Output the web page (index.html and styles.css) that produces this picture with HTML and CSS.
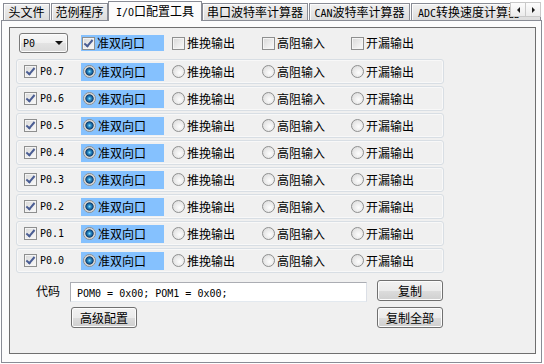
FILE: index.html
```html
<!DOCTYPE html>
<html>
<head>
    <title>I/O口配置工具</title>
    <link rel="stylesheet" href="styles.css">
    <meta http-equiv="content-type" charset="UTF-8">
</head>
<body>
    <div class="tabs">
        <div class="tab tab-head">头文件</div>
        <div class="tab tab-demo">范例程序</div>
        <div class="tab tab-io active"><span class="mono">I/O</span>口配置工具</div>
        <div class="tab tab-uart">串口波特率计算器</div>
        <div class="tab tab-can"><span class="mono">CAN</span>波特率计算器</div>
        <div class="tab tab-adc"><span class="mono">ADC</span>转换速度计算器</div>
        <div class="tab-scroll">
            <span class="scroll-btn"><span class="arrow-left"></span></span>
            <span class="scroll-btn"><span class="arrow-right"></span></span>
        </div>
    </div>

    <div class="page">
        <div class="group">
            <div class="head-row">
                <div class="combo"><span class="mono">P0</span><span class="combo-arrow"></span></div>
                <div class="col c1"><span class="hl"><span class="cb checked"></span>准双向口</span></div>
                <div class="col c2"><span class="cb"></span>推挽输出</div>
                <div class="col c3"><span class="cb"></span>高阻输入</div>
                <div class="col c4"><span class="cb"></span>开漏输出</div>
            </div>

            <div class="pin-list">
                <div class="pin">
                    <div class="pin-name"><span class="cb checked"></span><span class="mono">P0.7</span></div>
                    <div class="col c1"><span class="hl hl-row"><span class="rb on"></span>准双向口</span></div>
                    <div class="col c2"><span class="rb"></span>推挽输出</div>
                    <div class="col c3"><span class="rb"></span>高阻输入</div>
                    <div class="col c4"><span class="rb"></span>开漏输出</div>
                </div>
                <div class="pin">
                    <div class="pin-name"><span class="cb checked"></span><span class="mono">P0.6</span></div>
                    <div class="col c1"><span class="hl hl-row"><span class="rb on"></span>准双向口</span></div>
                    <div class="col c2"><span class="rb"></span>推挽输出</div>
                    <div class="col c3"><span class="rb"></span>高阻输入</div>
                    <div class="col c4"><span class="rb"></span>开漏输出</div>
                </div>
                <div class="pin">
                    <div class="pin-name"><span class="cb checked"></span><span class="mono">P0.5</span></div>
                    <div class="col c1"><span class="hl hl-row"><span class="rb on"></span>准双向口</span></div>
                    <div class="col c2"><span class="rb"></span>推挽输出</div>
                    <div class="col c3"><span class="rb"></span>高阻输入</div>
                    <div class="col c4"><span class="rb"></span>开漏输出</div>
                </div>
                <div class="pin">
                    <div class="pin-name"><span class="cb checked"></span><span class="mono">P0.4</span></div>
                    <div class="col c1"><span class="hl hl-row"><span class="rb on"></span>准双向口</span></div>
                    <div class="col c2"><span class="rb"></span>推挽输出</div>
                    <div class="col c3"><span class="rb"></span>高阻输入</div>
                    <div class="col c4"><span class="rb"></span>开漏输出</div>
                </div>
                <div class="pin">
                    <div class="pin-name"><span class="cb checked"></span><span class="mono">P0.3</span></div>
                    <div class="col c1"><span class="hl hl-row"><span class="rb on"></span>准双向口</span></div>
                    <div class="col c2"><span class="rb"></span>推挽输出</div>
                    <div class="col c3"><span class="rb"></span>高阻输入</div>
                    <div class="col c4"><span class="rb"></span>开漏输出</div>
                </div>
                <div class="pin">
                    <div class="pin-name"><span class="cb checked"></span><span class="mono">P0.2</span></div>
                    <div class="col c1"><span class="hl hl-row"><span class="rb on"></span>准双向口</span></div>
                    <div class="col c2"><span class="rb"></span>推挽输出</div>
                    <div class="col c3"><span class="rb"></span>高阻输入</div>
                    <div class="col c4"><span class="rb"></span>开漏输出</div>
                </div>
                <div class="pin">
                    <div class="pin-name"><span class="cb checked"></span><span class="mono">P0.1</span></div>
                    <div class="col c1"><span class="hl hl-row"><span class="rb on"></span>准双向口</span></div>
                    <div class="col c2"><span class="rb"></span>推挽输出</div>
                    <div class="col c3"><span class="rb"></span>高阻输入</div>
                    <div class="col c4"><span class="rb"></span>开漏输出</div>
                </div>
                <div class="pin">
                    <div class="pin-name"><span class="cb checked"></span><span class="mono">P0.0</span></div>
                    <div class="col c1"><span class="hl hl-row"><span class="rb on"></span>准双向口</span></div>
                    <div class="col c2"><span class="rb"></span>推挽输出</div>
                    <div class="col c3"><span class="rb"></span>高阻输入</div>
                    <div class="col c4"><span class="rb"></span>开漏输出</div>
                </div>
            </div>

            <div class="code-area">
                <div class="code-label">代码</div>
                <div class="code-box"><span class="mono">POM0 = 0x00; POM1 = 0x00;</span></div>
                <button class="btn">复制</button>
                <div></div>
                <div><button class="btn btn-adv">高级配置</button></div>
                <button class="btn">复制全部</button>
            </div>
        </div>
    </div>
</body>
</html>
```

FILE: styles.css
```css
body {
    margin: 0;
    background-color: #ffffff;
    font-family: "Noto Sans CJK SC", sans-serif;
    font-size: 12px;
    color: #000000;
}

.mono {
    font-family: "DejaVu Sans Mono", "Noto Sans CJK SC", monospace;
    font-size: 10px;
}

/* tab strip */
.tabs {
    position: relative;
    z-index: 1;
    display: flex;
    align-items: flex-end;
    height: 21px;
    padding-left: 3px;
    overflow: hidden;
    white-space: nowrap;
}

.tab {
    flex: none;
    box-sizing: border-box;
    height: 17px;
    margin-bottom: 1px;
    border: 1px solid #898c95;
    border-bottom: none;
    background: linear-gradient(#f1f1f1, #dcdcdc);
    box-shadow: inset 1px 1px 0 #fbfbfb;
    line-height: 16px;
    text-align: center;
}

.tab-head { width: 47px; }
.tab-demo { width: 57px; margin-left: 1px; }
.tab-io { width: 94px; }
.tab-uart { width: 106px; }
.tab-can { width: 101px; margin-left: 1px; }
.tab-adc { width: 130px; margin-left: 1px; text-align: left; padding-left: 6px; }

.tab.active {
    height: 20px;
    margin-bottom: 0;
    background: #fcfcfc;
    box-shadow: none;
    line-height: 18px;
}

.tab-scroll {
    position: absolute;
    left: 510px;
    top: 2px;
    display: flex;
    background: #ffffff;
}

.scroll-btn {
    display: flex;
    align-items: center;
    justify-content: center;
    box-sizing: border-box;
    width: 16px;
    height: 15px;
    border: 1px solid #c9c9c9;
    background: linear-gradient(#fdfdfd, #ececec);
}

.scroll-btn + .scroll-btn {
    margin-left: -1px;
}

.arrow-left {
    border-top: 3px solid transparent;
    border-bottom: 3px solid transparent;
    border-right: 3px solid #1a1a1a;
}

.arrow-right {
    border-top: 3px solid transparent;
    border-bottom: 3px solid transparent;
    border-left: 3px solid #1a1a1a;
}

/* page */
.page {
    box-sizing: border-box;
    width: 541px;
    height: 343px;
    margin: -1px 0 0 1px;
    padding: 6px 0 0 7px;
    border: 1px solid #898c95;
    background-color: #fcfcfc;
}

.group {
    box-sizing: border-box;
    width: 527px;
    height: 327px;
    padding-top: 5px;
    border: 1px solid #6f6f6f;
    background-color: #f0f0f0;
}

.head-row {
    display: flex;
    align-items: center;
    height: 20px;
    padding-left: 9px;
}

.combo {
    display: flex;
    align-items: center;
    justify-content: space-between;
    box-sizing: border-box;
    width: 49px;
    height: 20px;
    margin-right: 13px;
    padding: 0 4px 0 3px;
    border: 1px solid #7a7a7a;
    border-radius: 3px;
    background: linear-gradient(#f7f7f7 0%, #efefef 50%, #e3e3e3 50%, #d9d9d9 100%);
    box-shadow: inset 0 0 0 1px #fcfcfc;
}

.combo-arrow {
    border-left: 4px solid transparent;
    border-right: 4px solid transparent;
    border-top: 4px solid #111111;
}

.col {
    display: flex;
    align-items: center;
    gap: 2px;
    line-height: 16px;
}

.c1 { width: 91px; }
.c2 { width: 90px; }
.c3 { width: 89px; }

.hl {
    display: flex;
    align-items: center;
    gap: 2px;
    box-sizing: border-box;
    width: 83px;
    height: 16px;
    padding-left: 1px;
    background-color: #85c1fe;
}

.hl-row {
    height: 18px;
    padding-left: 2px;
}

/* checkbox */
.cb {
    position: relative;
    flex: none;
    box-sizing: border-box;
    width: 13px;
    height: 13px;
    border: 1px solid #8e8f8f;
    background: linear-gradient(135deg, #d8d8d8, #fbfbfb);
    box-shadow: inset 0 0 0 1px #f4f4f4;
}

.cb.checked::after {
    content: "";
    position: absolute;
    left: 3px;
    top: 0px;
    width: 3px;
    height: 7px;
    border-right: 2px solid #4a5d93;
    border-bottom: 2px solid #4a5d93;
    transform: rotate(40deg);
}

/* radio */
.rb {
    flex: none;
    box-sizing: border-box;
    width: 13px;
    height: 13px;
    border: 1px solid #8e8f8f;
    border-radius: 50%;
    background: radial-gradient(circle at 60% 60%, #fdfdfd 0, #e6e6e6 60%, #d2d2d2 100%);
}

.rb.on {
    background: radial-gradient(circle at 50% 50%, #8fe0fb 0, #2d8fc8 1.6px, #155a95 3px, #0d3c68 3.8px, #c6c6c6 4.4px, #f2f2f2 6px);
}

/* pin rows */
.pin-list {
    margin-top: 6px;
}

.pin {
    display: flex;
    align-items: center;
    box-sizing: border-box;
    width: 428px;
    height: 25px;
    margin: 0 0 2px 6px;
    padding-left: 7px;
    border: 1px solid #d8dee4;
    border-radius: 3px;
    box-shadow: inset 0 0 0 1px #f8f8f8;
}

.pin-name {
    display: flex;
    align-items: center;
    gap: 3px;
    width: 57px;
}

/* code area */
.code-area {
    display: grid;
    grid-template-columns: 60px 307px 66px;
    grid-template-rows: 22px 21px;
    row-gap: 5px;
    margin-top: 7px;
}

.code-label {
    padding-right: 10px;
    text-align: right;
    line-height: 22px;
}

.code-box {
    box-sizing: border-box;
    width: 297px;
    height: 20px;
    margin-top: 2px;
    padding-left: 6px;
    border: 1px solid #abadb3;
    border-bottom-color: #e3e9ef;
    border-right-color: #dbdfe6;
    background: #ffffff;
    line-height: 18px;
}

.btn {
    box-sizing: border-box;
    width: 66px;
    height: 21px;
    padding: 0;
    border: 1px solid #707070;
    border-radius: 3px;
    background: linear-gradient(#f2f2f2 0%, #ebebeb 50%, #dddddd 50%, #cfcfcf 100%);
    box-shadow: inset 0 0 0 1px #fcfcfc;
    font-family: "Noto Sans CJK SC", sans-serif;
    font-size: 12px;
    line-height: 18px;
    color: #000000;
}

.btn-adv {
    margin-left: 1px;
}
```
